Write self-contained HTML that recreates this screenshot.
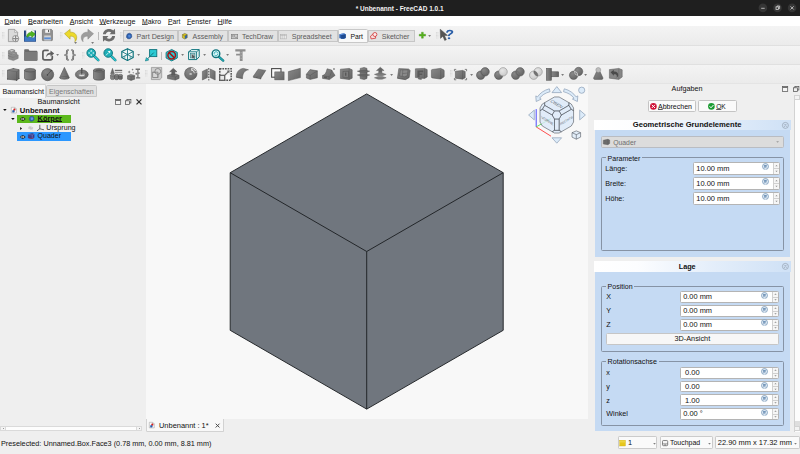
<!DOCTYPE html>
<html><head><meta charset="utf-8"><title>FreeCAD</title>
<style>
*{box-sizing:border-box;margin:0;padding:0}
html,body{width:800px;height:454px;overflow:hidden;background:#efefef;font-family:"Liberation Sans",sans-serif;font-size:7.2px;color:#111}
.t{position:absolute;white-space:nowrap;line-height:1}
.r{position:absolute}
svg{position:absolute;overflow:visible}
u{text-decoration-thickness:0.5px;text-underline-offset:0.2px;text-decoration-color:#5a5a5a}
</style></head><body>
<div class="r" style="left:0.00px;top:0.00px;width:800.00px;height:15.70px;background:#1f1f1f;"></div>
<span class="t" style="left:355.70px;top:6.02px;font-size:6.49px;color:#f4f4f4;font-weight:bold;">* Unbenannt - FreeCAD 1.0.1</span>
<svg style="left:750px;top:0" width="50" height="16" viewBox="750 0 50 16"><g fill="#353535"><circle cx="762.9" cy="7.9" r="4.3"/><circle cx="777.5" cy="7.9" r="4.3"/><circle cx="792.1" cy="7.9" r="4.3"/></g><g stroke="#dcdcdc" stroke-width="0.75" fill="none"><path d="M761.2 8.3h3.500"/><rect x="776" y="6.900" width="2.600" height="2.600"/><path d="M777 6.900v-0.900h2.600v2.600h-1"/><path d="M790.500 6.300l3.200 3.200M793.700 6.300l-3.200 3.200"/></g></svg>
<div class="r" style="left:0.00px;top:15.70px;width:800.00px;height:10.20px;background:#ffffff;"></div>
<span class="t" style="left:4.50px;top:18.02px;font-size:7.07px;color:#111;"><u>D</u>atei</span>
<span class="t" style="left:28.00px;top:18.02px;font-size:7.24px;color:#111;"><u>B</u>earbeiten</span>
<span class="t" style="left:69.70px;top:19.02px;font-size:7.11px;color:#111;"><u>A</u>nsicht</span>
<span class="t" style="left:99.40px;top:19.02px;font-size:7.18px;color:#111;"><u>W</u>erkzeuge</span>
<span class="t" style="left:142.00px;top:19.02px;font-size:6.84px;color:#111;"><u>M</u>akro</span>
<span class="t" style="left:168.00px;top:19.02px;font-size:6.76px;color:#111;"><u>P</u>art</span>
<span class="t" style="left:187.00px;top:19.02px;font-size:7.08px;color:#111;"><u>F</u>enster</span>
<span class="t" style="left:217.60px;top:18.02px;font-size:7.20px;color:#111;"><u>H</u>ilfe</span>
<div class="r" style="left:0.00px;top:25.90px;width:800.00px;height:58.70px;background:#efefef;"></div>
<div class="r" style="left:0.00px;top:25.90px;width:800.00px;height:19.10px;background:linear-gradient(#f4f4f4,#f0f0f0 45%,#ebebeb)"></div>
<div class="r" style="left:0.00px;top:45.00px;width:800.00px;height:19.40px;background:linear-gradient(#f4f4f4,#f0f0f0 45%,#ebebeb)"></div>
<div class="r" style="left:0.00px;top:64.40px;width:800.00px;height:18.80px;background:linear-gradient(#f4f4f4,#f0f0f0 45%,#ebebeb)"></div>
<div class="r" style="left:0.00px;top:45.40px;width:800.00px;height:0.80px;background:#e0e0e0;"></div>
<div class="r" style="left:0.00px;top:64.40px;width:800.00px;height:0.80px;background:#e0e0e0;"></div>
<div class="r" style="left:0.00px;top:83.20px;width:800.00px;height:0.80px;background:#e4e4e4;"></div>
<div class="r" style="left:123.40px;top:29.60px;width:54.60px;height:12.60px;background:#e2e2e2;border:0.8px solid #c6c6c6;"></div>
<span class="t" style="left:136.60px;top:34.02px;font-size:7.16px;color:#5a5a5a;">Part Design</span>
<div class="r" style="left:178.00px;top:29.60px;width:50.00px;height:12.60px;background:#e2e2e2;border:0.8px solid #c6c6c6;"></div>
<span class="t" style="left:192.60px;top:33.02px;font-size:7.01px;color:#5a5a5a;">Assembly</span>
<div class="r" style="left:228.00px;top:29.60px;width:49.50px;height:12.60px;background:#e2e2e2;border:0.8px solid #c6c6c6;"></div>
<span class="t" style="left:242.00px;top:34.02px;font-size:6.97px;color:#5a5a5a;">TechDraw</span>
<div class="r" style="left:277.50px;top:29.60px;width:60.00px;height:12.60px;background:#e2e2e2;border:0.8px solid #c6c6c6;"></div>
<span class="t" style="left:291.70px;top:33.02px;font-size:7.05px;color:#5a5a5a;">Spreadsheet</span>
<div class="r" style="left:367.50px;top:29.60px;width:47.00px;height:12.60px;background:#e2e2e2;border:0.8px solid #c6c6c6;"></div>
<span class="t" style="left:381.70px;top:33.02px;font-size:7.04px;color:#5a5a5a;">Sketcher</span>
<div class="r" style="left:337.50px;top:28.50px;width:30.30px;height:14.00px;background:#f9f9f9;border:0.8px solid #c8c8c8;border-radius:1.5px 1.5px 0 0"></div>
<span class="t" style="left:350.50px;top:34.02px;font-size:6.82px;color:#111;">Part</span>
<div class="r" style="left:145.50px;top:84.00px;width:442.80px;height:335.20px;background:#f8f8f8;"></div>
<svg style="left:0.00px;top:0.80px" width="800.00" height="454.00" viewBox="0 0 800 454"><polygon points="366.7,92.9 503.2,171.7 503.2,329.3 366.7,408.1 230.2,329.3 230.2,171.7" fill="#70767e" stroke="#1f2225" stroke-width="0.95" stroke-linejoin="round"/>
<polyline points="230.2,171.7 366.7,250.5 503.2,171.7" fill="none" stroke="#1f2225" stroke-width="0.95"/>
<line x1="366.7" y1="250.5" x2="366.7" y2="408.1" stroke="#1f2225" stroke-width="0.95"/></svg>
<div class="r" style="left:0.00px;top:84.00px;width:145.50px;height:348.10px;background:#efefef;"></div>
<div class="r" style="left:0.00px;top:84.20px;width:46.20px;height:13.60px;background:#f8f8f8;border:0.8px solid #d4d4d4;border-bottom:none;border-left:none;border-radius:0 1.5px 0 0"></div>
<span class="t" style="left:2.40px;top:88.02px;font-size:7.20px;color:#111;">Baumansicht</span>
<div class="r" style="left:46.20px;top:85.10px;width:50.50px;height:12.40px;background:#e1e1e1;border:0.8px solid #c6c6c6;border-radius:1.5px 1.5px 0 0"></div>
<span class="t" style="left:49.00px;top:88.02px;font-size:7.07px;color:#7a7a7a;">Eigenschaften</span>
<span class="t" style="left:37.50px;top:98.02px;font-size:7.30px;color:#111;">Baumansicht</span>
<div class="r" style="left:17.30px;top:114.70px;width:53.60px;height:8.40px;background:#5cb91c;"></div>
<div class="r" style="left:17.30px;top:131.90px;width:53.60px;height:8.70px;background:#2b97ff;"></div>
<span class="t" style="left:19.70px;top:107.02px;font-size:7.66px;color:#111;font-weight:bold;">Unbenannt</span>
<span class="t" style="left:37.50px;top:115.02px;font-size:7.47px;color:#111;font-weight:bold;text-decoration:underline;text-decoration-thickness:0.6px;text-underline-offset:0.2px">Körper</span>
<span class="t" style="left:46.30px;top:125.02px;font-size:7.12px;color:#111;">Ursprung</span>
<span class="t" style="left:37.50px;top:132.02px;font-size:7.05px;color:#111;">Quader</span>
<div class="r" style="left:0.00px;top:425.50px;width:142.40px;height:5.90px;background:#fdfdfd;border:0.7px solid #dadada;"></div>
<div class="r" style="left:0.00px;top:425.50px;width:6.00px;height:5.90px;background:#f4f4f4;border:0.7px solid #dadada;"></div>
<div class="r" style="left:136.40px;top:425.50px;width:6.00px;height:5.90px;background:#f4f4f4;border:0.7px solid #dadada;"></div>
<div class="r" style="left:2.60px;top:428.00px;width:0.90px;height:0.90px;background:#9a9a9a;"></div>
<div class="r" style="left:139.00px;top:428.00px;width:0.90px;height:0.90px;background:#9a9a9a;"></div>
<div class="r" style="left:145.20px;top:419.20px;width:655.00px;height:13.00px;background:#efefef;"></div>
<div class="r" style="left:145.90px;top:419.00px;width:77.90px;height:12.60px;background:#f8f8f8;border:0.8px solid #d2d2d2;border-top:none;border-radius:0 0 1.5px 1.5px"></div>
<span class="t" style="left:159.00px;top:422.02px;font-size:7.45px;color:#111;">Unbenannt : 1*</span>
<div class="r" style="left:0.00px;top:432.20px;width:800.00px;height:22.60px;background:#efefef;"></div>
<span class="t" style="left:1.00px;top:440.02px;font-size:7.28px;color:#111;">Preselected: Unnamed.Box.Face3 (0.78 mm, 0.00 mm, 8.81 mm)</span>
<div class="r" style="left:618.30px;top:436.30px;width:39.10px;height:12.30px;background:#fafafa;border:0.8px solid #cbcbcb;border-radius:1.2px"></div>
<div class="r" style="left:660.20px;top:436.30px;width:52.40px;height:12.30px;background:#fafafa;border:0.8px solid #cbcbcb;border-radius:1.2px"></div>
<div class="r" style="left:715.40px;top:436.30px;width:84.20px;height:12.30px;background:#fafafa;border:0.8px solid #cbcbcb;border-radius:1.2px"></div>
<span class="t" style="left:628.00px;top:439.02px;font-size:7.40px;color:#111;">1</span>
<span class="t" style="left:670.00px;top:440.02px;font-size:6.96px;color:#111;">Touchpad</span>
<span class="t" style="left:717.80px;top:439.02px;font-size:7.46px;color:#111;">22.90 mm x 17.32 mm</span>
<svg style="left:619px;top:439px" width="8" height="8" viewBox="619 439 8 8"><rect x="619.700" y="440.200" width="5.700" height="5.800" fill="#e7c71c" stroke="#cfae10" stroke-width="0.400"/><rect x="620" y="440.500" width="5.100" height="2" fill="#f1db52" opacity="0.7"/></svg>
<div class="r" style="left:588.30px;top:84.00px;width:211.70px;height:347.40px;background:#efefef;"></div>
<span class="t" style="left:671.60px;top:85.02px;font-size:7.22px;color:#111;">Aufgaben</span>
<div class="r" style="left:648.00px;top:100.00px;width:48.00px;height:12.00px;background:#fafafa;border:0.8px solid #c4c4c4;border-radius:1.5px"></div>
<div class="r" style="left:698.00px;top:100.00px;width:39.00px;height:12.00px;background:#fafafa;border:0.8px solid #c4c4c4;border-radius:1.5px"></div>
<span class="t" style="left:658.00px;top:103.02px;font-size:7.03px;color:#111;"><u>A</u>bbrechen</span>
<span class="t" style="left:716.20px;top:104.02px;font-size:6.64px;color:#111;"><u>O</u>K</span>
<div class="r" style="left:594.20px;top:119.50px;width:196.40px;height:10.60px;background:linear-gradient(90deg,#ffffff 0%,#fcfdff 22%,#e4eefa 60%,#cfe1f6 100%)"></div>
<span class="t" style="left:632.80px;top:121.02px;font-size:7.62px;color:#111;font-weight:bold;">Geometrische Grundelemente</span>
<div class="r" style="left:594.90px;top:130.00px;width:195.50px;height:126.80px;background:#c5daf3;"></div>
<div class="r" style="left:601.00px;top:136.00px;width:183.00px;height:12.00px;background:#dcdcdc;border:0.8px solid #b9bcc2;border-radius:1.5px"></div>
<span class="t" style="left:613.20px;top:140.02px;font-size:6.84px;color:#6e6e6e;">Quader</span>
<div class="r" style="left:601.00px;top:157.00px;width:183.00px;height:94.00px;border:0.8px solid #8693a5;border-radius:1.5px"></div>
<div class="r" style="left:605.80px;top:155.00px;width:36.40px;height:5.00px;background:#c5daf3;"></div>
<span class="t" style="left:607.60px;top:155.02px;font-size:7.03px;color:#111;">Parameter</span>
<span class="t" style="left:605.20px;top:165.02px;font-size:7.19px;color:#111;">Länge:</span>
<div class="r" style="left:693.00px;top:162.00px;width:86.50px;height:13.00px;background:#ffffff;border:0.8px solid #b4b4b4;border-radius:1.5px"></div>
<span class="t" style="left:696.30px;top:165.02px;font-size:7.49px;color:#111;">10.00 mm</span>
<div class="r" style="left:772.50px;top:163.00px;width:6.00px;height:11.00px;background:#f6f6f6;border-left:0.8px solid #d0d0d0"></div>
<div class="r" style="left:772.50px;top:168.00px;width:6.00px;height:0.80px;background:#d0d0d0;"></div>
<svg style="left:772.50px;top:162.00px" width="7.00" height="13.00" viewBox="0 0 7 13"><path d="M2.300 4.30l1.200 -1.400l1.200 1.400zM2.300 8.70l1.200 1.400l1.200 -1.400z" fill="#8a8a8a"/></svg>
<svg style="left:761.70px;top:162.80px" width="7.00" height="7.00" viewBox="0 0 10 10"><circle cx="5" cy="5" r="4.300" fill="#dbe6f1" stroke="#6d90b3" stroke-width="1"/><path d="M3 3.600h4M3 5.400h4M4.300 3v4.200" stroke="#4f7ba6" stroke-width="0.900" fill="none"/><path d="M3.800 9.200l2.400 0" stroke="#eef3f8" stroke-width="0.800"/></svg>
<span class="t" style="left:605.20px;top:180.02px;font-size:7.20px;color:#111;">Breite:</span>
<div class="r" style="left:693.00px;top:177.00px;width:86.50px;height:13.00px;background:#ffffff;border:0.8px solid #b4b4b4;border-radius:1.5px"></div>
<span class="t" style="left:696.30px;top:180.02px;font-size:7.49px;color:#111;">10.00 mm</span>
<div class="r" style="left:772.50px;top:178.00px;width:6.00px;height:11.00px;background:#f6f6f6;border-left:0.8px solid #d0d0d0"></div>
<div class="r" style="left:772.50px;top:183.00px;width:6.00px;height:0.80px;background:#d0d0d0;"></div>
<svg style="left:772.50px;top:177.00px" width="7.00" height="13.00" viewBox="0 0 7 13"><path d="M2.300 4.30l1.200 -1.400l1.200 1.400zM2.300 8.70l1.200 1.400l1.200 -1.400z" fill="#8a8a8a"/></svg>
<svg style="left:761.70px;top:177.80px" width="7.00" height="7.00" viewBox="0 0 10 10"><circle cx="5" cy="5" r="4.300" fill="#dbe6f1" stroke="#6d90b3" stroke-width="1"/><path d="M3 3.600h4M3 5.400h4M4.300 3v4.200" stroke="#4f7ba6" stroke-width="0.900" fill="none"/><path d="M3.800 9.200l2.400 0" stroke="#eef3f8" stroke-width="0.800"/></svg>
<span class="t" style="left:605.20px;top:195.02px;font-size:7.19px;color:#111;">Höhe:</span>
<div class="r" style="left:693.00px;top:192.00px;width:86.50px;height:13.00px;background:#ffffff;border:0.8px solid #b4b4b4;border-radius:1.5px"></div>
<span class="t" style="left:696.30px;top:195.02px;font-size:7.49px;color:#111;">10.00 mm</span>
<div class="r" style="left:772.50px;top:193.00px;width:6.00px;height:11.00px;background:#f6f6f6;border-left:0.8px solid #d0d0d0"></div>
<div class="r" style="left:772.50px;top:198.00px;width:6.00px;height:0.80px;background:#d0d0d0;"></div>
<svg style="left:772.50px;top:192.00px" width="7.00" height="13.00" viewBox="0 0 7 13"><path d="M2.300 4.30l1.200 -1.400l1.200 1.400zM2.300 8.70l1.200 1.400l1.200 -1.400z" fill="#8a8a8a"/></svg>
<svg style="left:761.70px;top:192.80px" width="7.00" height="7.00" viewBox="0 0 10 10"><circle cx="5" cy="5" r="4.300" fill="#dbe6f1" stroke="#6d90b3" stroke-width="1"/><path d="M3 3.600h4M3 5.400h4M4.300 3v4.200" stroke="#4f7ba6" stroke-width="0.900" fill="none"/><path d="M3.800 9.200l2.400 0" stroke="#eef3f8" stroke-width="0.800"/></svg>
<div class="r" style="left:594.20px;top:261.30px;width:196.40px;height:10.50px;background:linear-gradient(90deg,#ffffff 0%,#fcfdff 22%,#e4eefa 60%,#cfe1f6 100%)"></div>
<span class="t" style="left:678.70px;top:263.02px;font-size:7.28px;color:#111;font-weight:bold;">Lage</span>
<div class="r" style="left:594.90px;top:271.80px;width:195.50px;height:159.60px;background:#c5daf3;"></div>
<div class="r" style="left:601.00px;top:286.00px;width:183.00px;height:65.50px;border:0.8px solid #8693a5;border-radius:1.5px"></div>
<div class="r" style="left:605.80px;top:284.00px;width:28.60px;height:5.00px;background:#c5daf3;"></div>
<span class="t" style="left:607.60px;top:283.02px;font-size:7.03px;color:#111;">Position</span>
<span class="t" style="left:606.30px;top:293.02px;font-size:7.20px;color:#111;">X</span>
<div class="r" style="left:680.00px;top:291.00px;width:99.00px;height:12.00px;background:#ffffff;border:0.8px solid #b4b4b4;border-radius:1.5px"></div>
<span class="t" style="left:683.20px;top:293.02px;font-size:7.40px;color:#111;">0.00 mm</span>
<div class="r" style="left:772.00px;top:292.00px;width:6.00px;height:10.00px;background:#f6f6f6;border-left:0.8px solid #d0d0d0"></div>
<div class="r" style="left:772.00px;top:296.50px;width:6.00px;height:0.80px;background:#d0d0d0;"></div>
<svg style="left:772.00px;top:291.00px" width="7.00" height="12.00" viewBox="0 0 7 12"><path d="M2.300 3.80l1.200 -1.400l1.200 1.400zM2.300 8.20l1.200 1.400l1.200 -1.400z" fill="#8a8a8a"/></svg>
<svg style="left:761.20px;top:291.90px" width="7.00" height="7.00" viewBox="0 0 10 10"><circle cx="5" cy="5" r="4.300" fill="#dbe6f1" stroke="#6d90b3" stroke-width="1"/><path d="M3 3.600h4M3 5.400h4M4.300 3v4.200" stroke="#4f7ba6" stroke-width="0.900" fill="none"/><path d="M3.800 9.200l2.400 0" stroke="#eef3f8" stroke-width="0.800"/></svg>
<span class="t" style="left:606.30px;top:307.02px;font-size:7.20px;color:#111;">Y</span>
<div class="r" style="left:680.00px;top:305.00px;width:99.00px;height:12.00px;background:#ffffff;border:0.8px solid #b4b4b4;border-radius:1.5px"></div>
<span class="t" style="left:683.20px;top:307.02px;font-size:7.40px;color:#111;">0.00 mm</span>
<div class="r" style="left:772.00px;top:306.00px;width:6.00px;height:10.00px;background:#f6f6f6;border-left:0.8px solid #d0d0d0"></div>
<div class="r" style="left:772.00px;top:310.50px;width:6.00px;height:0.80px;background:#d0d0d0;"></div>
<svg style="left:772.00px;top:305.00px" width="7.00" height="12.00" viewBox="0 0 7 12"><path d="M2.300 3.80l1.200 -1.400l1.200 1.400zM2.300 8.20l1.200 1.400l1.200 -1.400z" fill="#8a8a8a"/></svg>
<svg style="left:761.20px;top:305.65px" width="7.00" height="7.00" viewBox="0 0 10 10"><circle cx="5" cy="5" r="4.300" fill="#dbe6f1" stroke="#6d90b3" stroke-width="1"/><path d="M3 3.600h4M3 5.400h4M4.300 3v4.200" stroke="#4f7ba6" stroke-width="0.900" fill="none"/><path d="M3.800 9.200l2.400 0" stroke="#eef3f8" stroke-width="0.800"/></svg>
<span class="t" style="left:606.30px;top:321.02px;font-size:7.20px;color:#111;">Z</span>
<div class="r" style="left:680.00px;top:319.00px;width:99.00px;height:12.00px;background:#ffffff;border:0.8px solid #b4b4b4;border-radius:1.5px"></div>
<span class="t" style="left:683.20px;top:321.02px;font-size:7.40px;color:#111;">0.00 mm</span>
<div class="r" style="left:772.00px;top:320.00px;width:6.00px;height:10.00px;background:#f6f6f6;border-left:0.8px solid #d0d0d0"></div>
<div class="r" style="left:772.00px;top:324.50px;width:6.00px;height:0.80px;background:#d0d0d0;"></div>
<svg style="left:772.00px;top:319.00px" width="7.00" height="12.00" viewBox="0 0 7 12"><path d="M2.300 3.80l1.200 -1.400l1.200 1.400zM2.300 8.20l1.200 1.400l1.200 -1.400z" fill="#8a8a8a"/></svg>
<svg style="left:761.20px;top:319.40px" width="7.00" height="7.00" viewBox="0 0 10 10"><circle cx="5" cy="5" r="4.300" fill="#dbe6f1" stroke="#6d90b3" stroke-width="1"/><path d="M3 3.600h4M3 5.400h4M4.300 3v4.200" stroke="#4f7ba6" stroke-width="0.900" fill="none"/><path d="M3.800 9.200l2.400 0" stroke="#eef3f8" stroke-width="0.800"/></svg>
<div class="r" style="left:606.00px;top:333.00px;width:173.00px;height:12.00px;background:#f7f7f7;border:0.8px solid #c6c6c6;border-radius:1.5px"></div>
<span class="t" style="left:674.50px;top:335.02px;font-size:7.30px;color:#111;">3D-Ansicht</span>
<div class="r" style="left:601.00px;top:361.00px;width:183.00px;height:64.80px;border:0.8px solid #8693a5;border-radius:1.5px"></div>
<div class="r" style="left:605.80px;top:359.00px;width:53.00px;height:5.00px;background:#c5daf3;"></div>
<span class="t" style="left:607.60px;top:359.02px;font-size:7.17px;color:#111;">Rotationsachse</span>
<span class="t" style="left:606.30px;top:369.02px;font-size:7.20px;color:#111;">x</span>
<div class="r" style="left:680.00px;top:367.00px;width:99.00px;height:12.00px;background:#ffffff;border:0.8px solid #b4b4b4;border-radius:1.5px"></div>
<span class="t" style="left:685.00px;top:369.02px;font-size:7.55px;color:#111;">0.00</span>
<div class="r" style="left:772.00px;top:368.00px;width:6.00px;height:10.00px;background:#f6f6f6;border-left:0.8px solid #d0d0d0"></div>
<div class="r" style="left:772.00px;top:372.50px;width:6.00px;height:0.80px;background:#d0d0d0;"></div>
<svg style="left:772.00px;top:367.00px" width="7.00" height="12.00" viewBox="0 0 7 12"><path d="M2.300 3.80l1.200 -1.400l1.200 1.400zM2.300 8.20l1.200 1.400l1.200 -1.400z" fill="#8a8a8a"/></svg>
<svg style="left:761.20px;top:367.90px" width="7.00" height="7.00" viewBox="0 0 10 10"><circle cx="5" cy="5" r="4.300" fill="#dbe6f1" stroke="#6d90b3" stroke-width="1"/><path d="M3 3.600h4M3 5.400h4M4.300 3v4.200" stroke="#4f7ba6" stroke-width="0.900" fill="none"/><path d="M3.800 9.200l2.400 0" stroke="#eef3f8" stroke-width="0.800"/></svg>
<span class="t" style="left:606.30px;top:383.02px;font-size:7.20px;color:#111;">y</span>
<div class="r" style="left:680.00px;top:381.00px;width:99.00px;height:11.00px;background:#ffffff;border:0.8px solid #b4b4b4;border-radius:1.5px"></div>
<span class="t" style="left:685.00px;top:383.02px;font-size:7.55px;color:#111;">0.00</span>
<div class="r" style="left:772.00px;top:382.00px;width:6.00px;height:9.00px;background:#f6f6f6;border-left:0.8px solid #d0d0d0"></div>
<div class="r" style="left:772.00px;top:386.00px;width:6.00px;height:0.80px;background:#d0d0d0;"></div>
<svg style="left:772.00px;top:381.00px" width="7.00" height="11.00" viewBox="0 0 7 11"><path d="M2.300 3.30l1.200 -1.400l1.200 1.400zM2.300 7.70l1.200 1.400l1.200 -1.400z" fill="#8a8a8a"/></svg>
<svg style="left:761.20px;top:381.63px" width="7.00" height="7.00" viewBox="0 0 10 10"><circle cx="5" cy="5" r="4.300" fill="#dbe6f1" stroke="#6d90b3" stroke-width="1"/><path d="M3 3.600h4M3 5.400h4M4.300 3v4.200" stroke="#4f7ba6" stroke-width="0.900" fill="none"/><path d="M3.800 9.200l2.400 0" stroke="#eef3f8" stroke-width="0.800"/></svg>
<span class="t" style="left:606.30px;top:397.02px;font-size:7.20px;color:#111;">z</span>
<div class="r" style="left:680.00px;top:394.00px;width:99.00px;height:12.00px;background:#ffffff;border:0.8px solid #b4b4b4;border-radius:1.5px"></div>
<span class="t" style="left:685.00px;top:397.02px;font-size:7.55px;color:#111;">1.00</span>
<div class="r" style="left:772.00px;top:395.00px;width:6.00px;height:10.00px;background:#f6f6f6;border-left:0.8px solid #d0d0d0"></div>
<div class="r" style="left:772.00px;top:399.50px;width:6.00px;height:0.80px;background:#d0d0d0;"></div>
<svg style="left:772.00px;top:394.00px" width="7.00" height="12.00" viewBox="0 0 7 12"><path d="M2.300 3.80l1.200 -1.400l1.200 1.400zM2.300 8.20l1.200 1.400l1.200 -1.400z" fill="#8a8a8a"/></svg>
<svg style="left:761.20px;top:395.36px" width="7.00" height="7.00" viewBox="0 0 10 10"><circle cx="5" cy="5" r="4.300" fill="#dbe6f1" stroke="#6d90b3" stroke-width="1"/><path d="M3 3.600h4M3 5.400h4M4.300 3v4.200" stroke="#4f7ba6" stroke-width="0.900" fill="none"/><path d="M3.800 9.200l2.400 0" stroke="#eef3f8" stroke-width="0.800"/></svg>
<span class="t" style="left:606.30px;top:410.02px;font-size:7.20px;color:#111;">Winkel</span>
<div class="r" style="left:680.00px;top:408.00px;width:99.00px;height:12.00px;background:#ffffff;border:0.8px solid #b4b4b4;border-radius:1.5px"></div>
<span class="t" style="left:683.20px;top:410.02px;font-size:7.47px;color:#111;">0.00 °</span>
<div class="r" style="left:772.00px;top:409.00px;width:6.00px;height:10.00px;background:#f6f6f6;border-left:0.8px solid #d0d0d0"></div>
<div class="r" style="left:772.00px;top:413.50px;width:6.00px;height:0.80px;background:#d0d0d0;"></div>
<svg style="left:772.00px;top:408.00px" width="7.00" height="12.00" viewBox="0 0 7 12"><path d="M2.300 3.80l1.200 -1.400l1.200 1.400zM2.300 8.20l1.200 1.400l1.200 -1.400z" fill="#8a8a8a"/></svg>
<svg style="left:761.20px;top:409.09px" width="7.00" height="7.00" viewBox="0 0 10 10"><circle cx="5" cy="5" r="4.300" fill="#dbe6f1" stroke="#6d90b3" stroke-width="1"/><path d="M3 3.600h4M3 5.400h4M4.300 3v4.200" stroke="#4f7ba6" stroke-width="0.900" fill="none"/><path d="M3.800 9.200l2.400 0" stroke="#eef3f8" stroke-width="0.800"/></svg>
<div class="r" style="left:794.20px;top:94.60px;width:6.00px;height:337.00px;background:#fcfcfc;border-left:0.8px solid #d2d2d2"></div>
<div class="r" style="left:794.20px;top:94.60px;width:6.00px;height:5.00px;background:#f3f3f3;border:0.7px solid #d2d2d2;"></div>
<div class="r" style="left:794.20px;top:426.00px;width:6.00px;height:5.00px;background:#f3f3f3;border:0.7px solid #d2d2d2;"></div>
<div class="r" style="left:794.20px;top:420.60px;width:6.00px;height:5.20px;background:#dedede;border-left:0.8px solid #cfcfcf"></div>
<svg style="left:1.60px;top:31.95px" width="2.40" height="6.40" viewBox="0 0 2.4 6.4"><path d="M0.500 0v6.4M1.900 0v6.4" stroke="#d0d0d0" stroke-width="0.800" stroke-dasharray="0.900 0.600"/></svg>
<svg style="left:8.00px;top:28.65px" width="12.00" height="13.00" viewBox="0 0 12 13"><path d="M0.4 0.4h6.2l3 3v9.2h-9.2z" fill="#dadada" stroke="#8b8b8b" stroke-width="0.7"/>
<path d="M6.6 0.4v3h3z" fill="#f3f3f3" stroke="#8b8b8b" stroke-width="0.5" stroke-linejoin="round"/>
<circle cx="7.6" cy="9.6" r="3.1" fill="#f2f2f2" stroke="#8a8a8a" stroke-width="0.9"/>
<path d="M7.6 6.7v5.8M4.7 9.6h5.8" stroke="#8a8a8a" stroke-width="1.2"/></svg>
<svg style="left:24.20px;top:28.55px" width="12.00" height="12.80" viewBox="0 0 12 12.8"><rect x="0" y="1.5" width="12" height="11.2" fill="#21427c"/>
<path d="M2.2 0.2h6.4l1.9 1.9v8h-8.3z" fill="#fbfbfb" stroke="#cfcfcf" stroke-width="0.35"/>
<path d="M8.6 0.2v1.9h1.9z" fill="#d8d8d8"/>
<path d="M0.5 7.8c1.6-0.9 3.2-0.9 5.5 0s3.9 0.9 5.5 0v4.5h-11z" fill="#3f79c3"/>
<path d="M2.6 7.6c0.1-2.6 2-4.3 4.6-4.2l0-1.3 4.2 3-3.6 3.6-0.2-1.7c-1.6-0.4-3.2 0-3.7 1.3z" fill="#4db31f" stroke="#2d7d10" stroke-width="0.45" stroke-linejoin="round"/></svg>
<svg style="left:41.80px;top:29.25px" width="10.80" height="12.00" viewBox="0 0 10.8 12"><path d="M0.4 1.1q0-0.7 0.7-0.7h8.3l1 1v9.5q0 0.7-0.7 0.7h-8.6q-0.7 0-0.7-0.7z" fill="#929292" stroke="#6d6d6d" stroke-width="0.7"/>
<rect x="3.2" y="0.5" width="4.9" height="3.3" fill="#f4f4f4"/>
<rect x="6.1" y="0.9" width="1" height="2.2" fill="#4e4e4e"/>
<rect x="2.2" y="6.5" width="6.6" height="5" fill="#d2d2d2"/>
<rect x="2.2" y="8.4" width="6.6" height="1.9" fill="#5b8dd4"/></svg>
<svg style="left:59.60px;top:31.95px" width="2.40" height="6.40" viewBox="0 0 2.4 6.4"><path d="M0.500 0v6.4M1.900 0v6.4" stroke="#d0d0d0" stroke-width="0.800" stroke-dasharray="0.900 0.600"/></svg>
<svg style="left:63.60px;top:28.55px" width="14.00" height="14.50" viewBox="0 0 14 14.5"><path d="M0.5 4.7l5.6-4.4v2.9c4.2-0.3 6.8 2.2 6.6 5.6-0.1 1.9-0.9 3.1-1.8 3.9 0.4-1.7 0.1-3.4-0.9-4.4-0.9-0.9-2.2-1.2-3.9-1.1v3z" fill="#ecd92c" stroke="#ab9c1b" stroke-width="0.55" stroke-linejoin="round"/></svg>
<svg style="left:74.00px;top:41.65px" width="3.20" height="1.80" viewBox="0 0 3.2 1.8"><path d="M0.2 0.2h2.8l-1.4 1.5z" fill="#555"/></svg>
<svg style="left:79.60px;top:28.55px" width="14.00" height="14.50" viewBox="0 0 14 14.5"><path d="M13.5 4.7l-5.6-4.4v2.9c-4.2-0.3-6.8 2.2-6.6 5.6 0.1 1.9 0.9 3.1 1.8 3.9-0.4-1.7-0.1-3.4 0.9-4.4 0.9-0.9 2.2-1.2 3.9-1.1v3z" fill="#9d9d9d" stroke="#858585" stroke-width="0.5" stroke-linejoin="round"/></svg>
<svg style="left:90.60px;top:41.95px" width="3.20" height="1.80" viewBox="0 0 3.2 1.8"><path d="M0.2 0.2h2.8l-1.4 1.5z" fill="#555"/></svg>
<div class="r" style="left:98.00px;top:32.20px;width:0.80px;height:8.20px;background:#b9b9b9;"></div>
<svg style="left:102.60px;top:28.75px" width="12.00" height="12.40" viewBox="0 0 12 12.4"><g transform="translate(-0.75,-0.75) scale(1.125)" fill="#6e6e6e"><path d="M0.600 5.400c0.200-3 2.600-4.900 5.600-4.800 1.400 0 2.600 0.500 3.500 1.300l1.600-1.500 0.200 5h-5l1.500-1.700c-1.300-1-3.300-0.900-4.200 0.400-0.300 0.400-0.500 0.800-0.600 1.300z"/>
<path d="M11.400 7c-0.200 3-2.600 4.900-5.600 4.800-1.400 0-2.600-0.500-3.500-1.300l-1.600 1.500-0.200-5h5l-1.500 1.700c1.300 1 3.300 0.900 4.200-0.400 0.300-0.400 0.500-0.800 0.600-1.300z"/></g></svg>
<svg style="left:120.20px;top:31.95px" width="2.40" height="6.40" viewBox="0 0 2.4 6.4"><path d="M0.500 0v6.4M1.900 0v6.4" stroke="#d0d0d0" stroke-width="0.800" stroke-dasharray="0.900 0.600"/></svg>
<svg style="left:125.70px;top:33.35px" width="6.20" height="6.20" viewBox="0 0 6.2 6.2"><path d="M1.6 0.8l2.3-0.6 1.6 1.2 0.3 2.6-1.6 1.7-2.4 0.1-1.4-1.6 0.4-2.2z" fill="#2c5fae" stroke="#1c3f7d" stroke-width="0.5"/><path d="M2 2.2l1.8-0.4 1 1.2-0.6 1.4-1.7 0.1z" fill="#4f86d6"/></svg>
<svg style="left:181.80px;top:33.05px" width="5.60" height="6.40" viewBox="0 0 5.6 6.4"><path d="M0.4 1.6l2.4-1.2 2.4 1.2v3.2l-2.4 1.3-2.4-1.3z" fill="#d9c321" stroke="#5a5a2a" stroke-width="0.45"/><path d="M2.8 3v3.1l2.4-1.3v-3.2z" fill="#3465a4"/><path d="M0.4 1.6l2.4 1.4 2.4-1.4" fill="none" stroke="#5a5a2a" stroke-width="0.4"/></svg>
<svg style="left:230.70px;top:33.85px" width="7.00" height="5.00" viewBox="0 0 7 5"><rect x="0.3" y="0.3" width="6.4" height="4.4" fill="#c9c9c9" stroke="#7a7a7a" stroke-width="0.6"/><path d="M1.3 1.3h2.2v1.4h-2.2zM4.2 3.4h1.8" stroke="#6a6a6a" stroke-width="0.5" fill="#efefef"/></svg>
<svg style="left:280.20px;top:33.85px" width="6.60" height="5.20" viewBox="0 0 6.6 5.2"><rect x="0.3" y="0.3" width="6" height="4.6" fill="#e9e9e9" stroke="#a8a8a8" stroke-width="0.5"/><path d="M2.2 0.3v4.6M4.3 0.3v4.6M0.3 1.5h6" stroke="#a8a8a8" stroke-width="0.45"/></svg>
<svg style="left:339.20px;top:32.85px" width="7.00" height="6.20" viewBox="0 0 7 6.2"><path d="M0.3 1.2l4.6-0.9 1.8 0.9v3.7l-1.8 1-4.6-0.6z" fill="#2f62b0"/><path d="M0.3 1.2l4.6-0.9 1.8 0.9-4.5 0.9z" fill="#6a9ae2"/><path d="M2.2 2.1l4.5-0.9v3.7l-4.5 1z" fill="#1f4a8f"/></svg>
<svg style="left:369.80px;top:32.45px" width="7.40" height="7.40" viewBox="0 0 7.4 7.4"><path d="M0.5 4.2l2.1-1.8 2.6 0.7 0.5 3.1-4.6 0.7z" fill="#f6dede" stroke="#cc1f1f" stroke-width="0.7" stroke-linejoin="round"/><circle cx="4.9" cy="2.5" r="2" fill="#fbeaea" stroke="#cc1f1f" stroke-width="0.7"/></svg>
<svg style="left:419.00px;top:31.95px" width="6.80" height="6.40" viewBox="0 0 6.8 6.4"><path d="M2.5 0.2h1.8v2.1h2.3v1.8h-2.3v2.1h-1.8v-2.1h-2.3v-1.8h2.3z" fill="#56b21e" stroke="#3c8a12" stroke-width="0.35"/></svg>
<svg style="left:427.60px;top:34.75px" width="3.20" height="1.80" viewBox="0 0 3.2 1.8"><path d="M0.2 0.2h2.8l-1.4 1.5z" fill="#555"/></svg>
<svg style="left:435.60px;top:31.95px" width="2.40" height="6.40" viewBox="0 0 2.4 6.4"><path d="M0.500 0v6.4M1.900 0v6.4" stroke="#d0d0d0" stroke-width="0.800" stroke-dasharray="0.900 0.600"/></svg>
<svg style="left:439.60px;top:28.75px" width="13.40" height="11.80" viewBox="0 0 13.4 11.8"><g transform="translate(-0.6,0) scale(1.32,1.02)"><path d="M7.2 6.400c-0.100-1.600 2.600-1.700 2.600-3.400 0-1-0.900-1.600-1.900-1.600-1.100 0-1.900 0.600-2.100 1.600" fill="none" stroke="#2b5fa8" stroke-width="1.500" stroke-linecap="round"/><circle cx="7.300" cy="9" r="0.950" fill="#2b5fa8"/></g>
<path d="M0.2 0.2l0.3 9.2 2.3-2.2 1.9 4.3 1.7-0.8-1.9-4.1 3.1-0.2z" fill="#555" stroke="#3a3a3a" stroke-width="0.4" stroke-linejoin="round"/></svg>
<svg style="left:1.60px;top:51.55px" width="2.40" height="6.40" viewBox="0 0 2.4 6.4"><path d="M0.500 0v6.4M1.900 0v6.4" stroke="#d0d0d0" stroke-width="0.800" stroke-dasharray="0.900 0.600"/></svg>
<svg style="left:7.50px;top:48.75px" width="10.60" height="12.00" viewBox="0 0 10.6 12"><g stroke="#707070" stroke-width="0.450" stroke-linejoin="round">
<path d="M0.400 6.600l5-1.800 4.800 1.400v3.200l-4.800 2.200-5-1.600z" fill="#8a8a8a"/><path d="M0.400 6.600l5 1.600 4.800-2-4.800-1.400z" fill="#b9b9b9"/>
<path d="M0.400 4.200l4.200-1.600 4 1.200v2.600l-3.800 1.800-4.400-1.400z" fill="#8d8d8d"/><path d="M0.400 4.200l4.400 1.400 3.800-1.800-4-1.200z" fill="#c2c2c2"/>
<path d="M0.400 1.900l3.400-1.500 3 0.900v2.300l-3 1.500-3.400-1z" fill="#909090"/><path d="M0.400 1.900l3.400 1 3-1.600-3-0.900z" fill="#cacaca"/></g></svg>
<svg style="left:23.50px;top:49.05px" width="13.60" height="12.00" viewBox="0 0 13.6 12"><path d="M0.2 0.9q0-0.7 0.7-0.7h3.6l1 1.6h7.2q0.7 0 0.7 0.7v8.6q0 0.7-0.7 0.7h-11.8q-0.7 0-0.7-0.7z" fill="#6a6a6a"/>
<path d="M0.2 3h13.2v8.1q0 0.7-0.7 0.7h-11.8q-0.7 0-0.7-0.7z" fill="#7b7b7b"/></svg>
<svg style="left:41.50px;top:49.25px" width="12.40" height="11.80" viewBox="0 0 12.4 11.8"><path d="M6 1.4h-3.2q-1.9 0-1.9 1.9v5.6q0 1.9 1.9 1.9h5.6q1.9 0 1.9-1.9v-1.6" fill="none" stroke="#5e5e5e" stroke-width="1.7" stroke-linecap="round"/>
<path d="M4.2 8.2c0-2.900 1.6-4.700 4.300-4.800v-1.900l3.700 3-3.700 3v-1.900c-1.800 0-3.200 0.700-4.300 2.600z" fill="#5e5e5e"/></svg>
<svg style="left:56.20px;top:54.45px" width="3.20" height="1.80" viewBox="0 0 3.2 1.8"><path d="M0.2 0.2h2.8l-1.4 1.5z" fill="#555"/></svg>
<svg style="left:64.00px;top:49.05px" width="12.00" height="12.00" viewBox="0 0 12 12"><g fill="none" stroke-linecap="butt" stroke-linejoin="round"><path d="M4.700 1q-1.900 0-1.900 1.900v1.700q0 1.400-1.700 1.400q1.700 0 1.700 1.400v1.700q0 1.900 1.900 1.900" stroke="#505050" stroke-width="1.700"/><path d="M7.300 1q1.900 0 1.900 1.900v1.700q0 1.400 1.700 1.400q-1.700 0-1.700 1.400v1.700q0 1.900-1.900 1.900" stroke="#505050" stroke-width="1.700"/><path d="M4.700 1q-1.900 0-1.900 1.900v1.700q0 1.400-1.700 1.400q1.700 0 1.700 1.400v1.700q0 1.900 1.900 1.900" stroke="#dcdcdc" stroke-width="0.500"/><path d="M7.300 1q1.900 0 1.900 1.900v1.700q0 1.400 1.700 1.400q-1.700 0-1.700 1.400v1.700q0 1.900-1.900 1.900" stroke="#dcdcdc" stroke-width="0.500"/></g></svg>
<svg style="left:82.00px;top:51.55px" width="2.40" height="6.40" viewBox="0 0 2.4 6.4"><path d="M0.500 0v6.4M1.900 0v6.4" stroke="#d0d0d0" stroke-width="0.800" stroke-dasharray="0.900 0.600"/></svg>
<svg style="left:86.30px;top:48.45px" width="13.40" height="13.00" viewBox="0 0 13.4 13"><path d="M8.600 8.500l3.700 3.700" stroke="#0f737c" stroke-width="2.500" stroke-linecap="round"/><path d="M8.600 8.500l3.700 3.700" stroke="#2ccbd4" stroke-width="1.500" stroke-linecap="round"/>
<circle cx="5.200" cy="5" r="4.300" fill="#1eaeb7" stroke="#0f737c" stroke-width="0.900"/>
<path d="M5.200 1.700l1.100 1.700h-2.200zM5.200 8.300l1.100-1.700h-2.200zM1.900 5l1.700-1.100v2.200zM8.500 5l-1.700-1.100v2.200z" fill="#eefcfd"/></svg>
<svg style="left:103.10px;top:48.45px" width="13.40" height="13.00" viewBox="0 0 13.4 13"><path d="M8.600 8.500l3.700 3.700" stroke="#0f737c" stroke-width="2.500" stroke-linecap="round"/><path d="M8.600 8.500l3.700 3.700" stroke="#2ccbd4" stroke-width="1.500" stroke-linecap="round"/>
<circle cx="5.200" cy="5" r="4.300" fill="#1eaeb7" stroke="#0f737c" stroke-width="0.900"/>
<path d="M2.900 7.400l2.600-2.600" stroke="#eefcfd" stroke-width="0.800"/><path d="M7.500 2.700l-0.500 2.900-2.400-2.400z" fill="#eefcfd"/></svg>
<svg style="left:121.00px;top:48.45px" width="13.00" height="13.00" viewBox="0 0 13 13"><path d="M6.500 0.700l5.700 2.900v5.900l-5.700 2.900-5.700-2.900v-5.900z" fill="#f2f6f6" stroke="#0f737c" stroke-width="1.150" stroke-linejoin="round"/>
<path d="M6.500 0.700v11.700M0.800 3.600l11.400 5.900M12.200 3.600l-11.400 5.900" fill="none" stroke="#0f737c" stroke-width="0.850"/>
<path d="M3 8.600l1.700 0.200-0.900 1.200zM10 8.600l-1.700 0.200 0.900 1.200z" fill="#0f737c"/></svg>
<svg style="left:136.60px;top:54.45px" width="3.20" height="1.80" viewBox="0 0 3.2 1.8"><path d="M0.2 0.2h2.8l-1.4 1.5z" fill="#555"/></svg>
<svg style="left:144.60px;top:48.85px" width="12.40" height="12.40" viewBox="0 0 12.4 12.4"><rect x="4.600" y="0.600" width="7.200" height="7" fill="#2ccbd4" stroke="#0f737c" stroke-width="0.900"/>
<path d="M8.800 3.600l-6.400 6.400" stroke="#0f737c" stroke-width="1"/><path d="M0.400 12l1-3.400 2.400 2.400z" fill="#2ccbd4" stroke="#0f737c" stroke-width="0.600" stroke-linejoin="round"/></svg>
<div class="r" style="left:160.80px;top:52.10px;width:0.80px;height:7.60px;background:#b9b9b9;"></div>
<svg style="left:164.80px;top:48.55px" width="13.40" height="12.40" viewBox="0 0 13.4 12.4"><path d="M6.700 0.500l5.600 2.900v5.600l-5.600 2.900-5.600-2.900v-5.600z" fill="#2ccbd4" stroke="#0f737c" stroke-width="0.900" stroke-linejoin="round"/>
<circle cx="6.700" cy="6.200" r="3.800" fill="none" stroke="#a51616" stroke-width="1.500"/><path d="M4 3.500l5.400 5.400" stroke="#a51616" stroke-width="1.500"/></svg>
<svg style="left:180.60px;top:54.25px" width="3.20" height="1.80" viewBox="0 0 3.2 1.8"><path d="M0.2 0.2h2.8l-1.4 1.5z" fill="#555"/></svg>
<svg style="left:188.40px;top:49.05px" width="12.00" height="11.40" viewBox="0 0 12 11.4"><path d="M0.600 2.800l3-2.200h7.600v7.200l-2.600 2.800h-8z" fill="#f2fbfb" stroke="#0f737c" stroke-width="1" stroke-linejoin="round"/>
<path d="M0.600 2.800h8v7.800M8.600 2.800l2.600-2.200" fill="none" stroke="#0f737c" stroke-width="0.900"/>
<rect x="2.400" y="4.600" width="4.600" height="4.400" fill="#9fb7b9" stroke="#0f737c" stroke-width="0.500"/>
<path d="M4 5.400l0.200 4 1-1 0.900 1.700 0.700-0.400-0.900-1.600 1.300-0.200z" fill="#555"/></svg>
<svg style="left:203.10px;top:54.25px" width="3.20" height="1.80" viewBox="0 0 3.2 1.8"><path d="M0.2 0.2h2.8l-1.4 1.5z" fill="#555"/></svg>
<svg style="left:211.00px;top:48.65px" width="13.40" height="12.60" viewBox="0 0 13.4 12.6"><path d="M8 7.800l4.200 3.800" stroke="#0f737c" stroke-width="2.400" stroke-linecap="round"/><path d="M8 7.800l4.200 3.800" stroke="#23b4bd" stroke-width="1.100" stroke-linecap="round"/>
<circle cx="5" cy="4.700" r="3.800" fill="#d7f4f6" stroke="#0f737c" stroke-width="1.400"/>
<path d="M3.100 4.800a2 2 0 0 1 3.600-1.200M6.900 4.600a2 2 0 0 1-3.400 1.500" fill="none" stroke="#1aa3ac" stroke-width="0.900"/></svg>
<svg style="left:226.10px;top:54.25px" width="3.20" height="1.80" viewBox="0 0 3.2 1.8"><path d="M0.2 0.2h2.8l-1.4 1.5z" fill="#555"/></svg>
<svg style="left:235.00px;top:49.15px" width="10.80" height="12.20" viewBox="0 0 10.8 12.2"><path d="M0.300 0.300h10.200v2.200h-2.900v9.400h-2.800v-5.300h-3.700v-1.900h3.700v-2.200h-4.500z" fill="#8f8f8f"/>
<path d="M5.500 3.500h1.300M5.500 5h0.900M5.500 6.500h1.300M5.500 8h0.900M5.500 9.500h1.300" stroke="#dcdcdc" stroke-width="0.400"/></svg>
<svg width="0" height="0" style="left:0;top:0"><defs>
<linearGradient id="gg" x1="0" y1="0" x2="1" y2="1"><stop offset="0" stop-color="#888888"/><stop offset="1" stop-color="#646464"/></linearGradient>
<linearGradient id="gh" x1="0" y1="0" x2="1" y2="0"><stop offset="0" stop-color="#878787"/><stop offset="0.5" stop-color="#767676"/><stop offset="1" stop-color="#606060"/></linearGradient>
<radialGradient id="gs" cx="0.35" cy="0.3" r="0.8"><stop offset="0" stop-color="#888888"/><stop offset="1" stop-color="#616161"/></radialGradient>
<radialGradient id="gl" cx="0.4" cy="0.35" r="0.8"><stop offset="0" stop-color="#e6e6e6"/><stop offset="1" stop-color="#c4c4c4"/></radialGradient>
</defs></svg>
<svg style="left:1.60px;top:70.45px" width="2.40" height="6.40" viewBox="0 0 2.4 6.4"><path d="M0.500 0v6.4M1.900 0v6.4" stroke="#d0d0d0" stroke-width="0.800" stroke-dasharray="0.900 0.600"/></svg>
<svg style="left:6.50px;top:67.85px" width="12.60" height="12.80" viewBox="0 0 12.6 12.8"><path d="M0.500 2.200l5.800-1.700 5.800 1.200v8.800l-2.400 1.800-9.200-1.100z" fill="url(#gg)" stroke="#4e4e4e" stroke-width="0.600" stroke-linejoin="round"/>
<path d="M0.500 2.200l9.200 1.300 2.400-1.800M9.700 3.500v8.800" fill="none" stroke="#4e4e4e" stroke-width="0.500"/><path d="M0.500 2.200l5.800-1.700 5.800 1.200-2.400 1.800z" fill="#858585" opacity="0.7"/><g fill="#3e3e3e"><circle cx="0.600" cy="11.100" r="0.500"/><circle cx="9.700" cy="12.200" r="0.500"/><circle cx="12" cy="10.500" r="0.500"/><circle cx="6.300" cy="0.600" r="0.450"/></g></svg>
<svg style="left:24.00px;top:67.65px" width="12.00" height="12.60" viewBox="0 0 12 12.6"><path d="M0.500 2.200v8.200a5.500 1.800 0 0 0 11 0v-8.200z" fill="url(#gh)" stroke="#4e4e4e" stroke-width="0.600"/><ellipse cx="6" cy="2.200" rx="5.500" ry="1.800" fill="#777" stroke="#4e4e4e" stroke-width="0.600"/></svg>
<svg style="left:41.00px;top:67.55px" width="13.20" height="13.20" viewBox="0 0 13.2 13.2"><circle cx="6.600" cy="6.600" r="6.100" fill="url(#gs)" stroke="#4e4e4e" stroke-width="0.600"/><path d="M6.400 7l3.800-4.400" stroke="#4a4a4a" stroke-width="0.700"/><circle cx="6.400" cy="7" r="0.700" fill="#3e3e3e"/><circle cx="10.200" cy="2.700" r="0.600" fill="#3e3e3e"/></svg>
<svg style="left:59.40px;top:67.45px" width="10.80" height="12.80" viewBox="0 0 10.8 12.8"><path d="M5.400 0.400l-4.800 10.400a4.900 1.700 0 0 0 9.700 0z" fill="url(#gh)" stroke="#4e4e4e" stroke-width="0.600" stroke-linejoin="round"/><path d="M0.600 10.800a4.900 1.500 0 0 1 9.700 0" fill="none" stroke="#4e4e4e" stroke-width="0.400"/></svg>
<svg style="left:75.00px;top:68.45px" width="13.60" height="11.60" viewBox="0 0 13.6 11.6"><ellipse cx="6.800" cy="6.500" rx="6.400" ry="4.600" fill="url(#gs)" stroke="#4e4e4e" stroke-width="0.600"/><ellipse cx="6.800" cy="6.900" rx="3.300" ry="1.900" fill="#dcdcdc" stroke="#4e4e4e" stroke-width="0.500"/><path d="M3.600 7.300a3.300 1.900 0 0 1 6.400 0a3.300 1.500 0 0 0-6.400 0z" fill="#5e5e5e"/><path d="M6.800 0.200v6.400" stroke="#444" stroke-width="1"/><circle cx="6.800" cy="0.800" r="0.750" fill="#444"/></svg>
<svg style="left:93.00px;top:67.65px" width="12.00" height="12.60" viewBox="0 0 12 12.6"><path d="M0.500 2.200v8.200a5.500 1.800 0 0 0 11 0v-8.200z" fill="url(#gh)" stroke="#4e4e4e" stroke-width="0.600"/><ellipse cx="6" cy="2.200" rx="5.500" ry="1.800" fill="#808080" stroke="#4e4e4e" stroke-width="0.600"/><ellipse cx="6" cy="2.300" rx="3.600" ry="1" fill="#5c5c5c"/></svg>
<svg style="left:110.00px;top:67.85px" width="12.80" height="12.40" viewBox="0 0 12.8 12.4"><path d="M2.500 0.300l-1.900 5.400h3.800z" fill="#6c6c6c" stroke="#4e4e4e" stroke-width="0.400"/><rect x="4.800" y="1.800" width="7.400" height="1.300" fill="#6a6a6a"/><path d="M4.800 4.400h7.400" stroke="#7a7a7a" stroke-width="0.700"/>
<path d="M0.500 7.200v3.400a2 1 0 0 0 4 0v-3.400zM4.600 7v3.800a2 1 0 0 0 4 0v-3.800zM8.600 7.200v3.400a1.900 1 0 0 0 3.800 0v-3.400z" fill="url(#gh)" stroke="#4e4e4e" stroke-width="0.500"/><ellipse cx="6.600" cy="7" rx="2" ry="0.900" fill="#909090" stroke="#4e4e4e" stroke-width="0.400"/><ellipse cx="2.500" cy="7.200" rx="2" ry="0.900" fill="#909090" stroke="#4e4e4e" stroke-width="0.400"/><ellipse cx="10.500" cy="7.200" rx="1.900" ry="0.900" fill="#909090" stroke="#4e4e4e" stroke-width="0.400"/></svg>
<svg style="left:127.00px;top:67.65px" width="13.60" height="12.60" viewBox="0 0 13.6 12.6"><path d="M0.500 7.800l3.200-1.400 4 1v3.800l-3.600 1.200-3.600-1.200z" fill="url(#gg)" stroke="#4e4e4e" stroke-width="0.500" stroke-linejoin="round"/><path d="M0.500 7.800l3.600 1 3.600-0.400M4.100 8.800v3.600" fill="none" stroke="#4e4e4e" stroke-width="0.400"/>
<path d="M8.600 0.600h4.400v1.300h-1.500v2.600h1.300v1.200h-1.300v3.600h1.700v1.300h-4.200v-1.300h1.300v-7.400h-1.700z" fill="#6e6e6e"/><circle cx="9.300" cy="5.700" r="1" fill="#7a7a7a"/>
<path d="M2.200 2.600l0.500 1 1 0.500-1 0.500-0.500 1-0.500-1-1-0.500 1-0.500zM5.600 0.400l0.400 0.800 0.800 0.400-0.800 0.400-0.400 0.800-0.400-0.800-0.800-0.400 0.800-0.400zM6.200 3.800l0.300 0.700 0.700 0.300-0.700 0.300-0.300 0.700-0.300-0.700-0.700-0.300 0.700-0.300z" fill="#777"/></svg>
<svg style="left:145.20px;top:70.45px" width="2.40" height="6.40" viewBox="0 0 2.4 6.4"><path d="M0.500 0v6.4M1.900 0v6.4" stroke="#d0d0d0" stroke-width="0.800" stroke-dasharray="0.900 0.600"/></svg>
<svg style="left:151.00px;top:67.45px" width="11.20" height="13.00" viewBox="0 0 11.2 13"><path d="M0.400 0.400h10.300v10.400l-1.800 1.800h-8.500z" fill="#cdcdcd" stroke="#8e8e8e" stroke-width="0.700" stroke-linejoin="round"/>
<rect x="1.700" y="5.200" width="5.200" height="5.400" fill="#d6d6d6" stroke="#7c7c7c" stroke-width="0.800"/><circle cx="6.800" cy="4.400" r="2.900" fill="#d6d6d6" fill-opacity="0.6" stroke="#7c7c7c" stroke-width="0.800"/><path d="M1.700 5.200h5.200v5.400" fill="none" stroke="#7c7c7c" stroke-width="0.600"/></svg>
<svg style="left:167.00px;top:67.75px" width="12.60" height="12.40" viewBox="0 0 12.6 12.4"><path d="M0.500 7.600l3.600-1.600h5l3 1.400v3l-3.800 1.700-7.800-1.500z" fill="url(#gg)" stroke="#4e4e4e" stroke-width="0.500" stroke-linejoin="round"/><path d="M0.500 7.600l7.800 1.300 3.800-1.500M8.300 8.900v3.200" fill="none" stroke="#4e4e4e" stroke-width="0.400"/>
<path d="M6.300 0.200l3.700 3.600h-2.100v3.400h-3.200v-3.400h-2.100z" fill="#606060" stroke="#4a4a4a" stroke-width="0.400" stroke-linejoin="round"/></svg>
<svg style="left:184.40px;top:67.45px" width="13.80" height="13.20" viewBox="0 0 13.8 13.2"><circle cx="6.800" cy="6.700" r="6.200" fill="url(#gs)" stroke="#4e4e4e" stroke-width="0.600"/>
<path d="M7.200 0.900a5.600 5.600 0 0 1 5.400 5l-2.600 0.300a3.200 3.200 0 0 0-2.900-2.800z" fill="#e6e6e6"/><path d="M8.400 2.300a4.300 4.300 0 0 1 2.700 2.500" fill="none" stroke="#5a5a5a" stroke-width="0.900"/><path d="M12 3.900l-0.300 2.100-1.900-1z" fill="#5a5a5a"/><circle cx="6.600" cy="7" r="1.100" fill="#ececec"/><circle cx="6.600" cy="7" r="0.450" fill="#555"/></svg>
<svg style="left:201.60px;top:67.85px" width="13.60" height="12.40" viewBox="0 0 13.6 12.4"><path d="M0.400 3.400l5-2.400v8.600l-5 2.400z" fill="url(#gg)" stroke="#4e4e4e" stroke-width="0.500" stroke-linejoin="round"/><path d="M13.200 3.400l-5-2.400v8.600l5 2.400z" fill="url(#gg)" stroke="#4e4e4e" stroke-width="0.500" stroke-linejoin="round"/>
<path d="M6.800 0v12.400" stroke="#3e3e3e" stroke-width="1" stroke-dasharray="1.700 1.100"/></svg>
<svg style="left:218.80px;top:67.55px" width="13.00" height="13.00" viewBox="0 0 13 13"><rect x="0.800" y="0.800" width="11.400" height="11.400" fill="none" stroke="#555" stroke-width="1.500" stroke-dasharray="1.700 0.900"/>
<rect x="0.700" y="7.300" width="5" height="5" fill="#e8e8e8" stroke="#5a5a5a" stroke-width="1.200"/><path d="M6 7l3.400-3.400" stroke="#666" stroke-width="1.100"/><path d="M10.700 2.300l-0.500 3-2.500-2.500z" fill="#666"/><rect x="7.200" y="7.200" width="3.600" height="3.600" fill="#fafafa"/></svg>
<svg style="left:236.00px;top:68.25px" width="12.80" height="11.20" viewBox="0 0 12.8 11.2"><path d="M0.300 9.200c0-5 2.600-8.400 7.200-8.800l5 1.400c-4 0.600-6 3.600-6 8.800z" fill="url(#gg)" stroke="#4e4e4e" stroke-width="0.500" stroke-linejoin="round"/><path d="M0.300 9.200l6.200 1.400" stroke="#4e4e4e" stroke-width="0.400"/></svg>
<svg style="left:253.00px;top:68.25px" width="13.20" height="11.20" viewBox="0 0 13.2 11.2"><path d="M0.400 8.200l4.800-7 7.600 1.200-4.800 7.600z" fill="url(#gg)" stroke="#4e4e4e" stroke-width="0.500" stroke-linejoin="round"/><path d="M0.400 8.200v1.200l7.600 1.700v-1.100" fill="#5f5f5f" stroke="#4e4e4e" stroke-width="0.400" stroke-linejoin="round"/></svg>
<svg style="left:270.80px;top:68.25px" width="13.40" height="12.20" viewBox="0 0 13.4 12.2"><rect x="0.600" y="0.600" width="9.400" height="8.600" fill="#fafafa" stroke="#4a4a4a" stroke-width="1.100"/><rect x="3.800" y="3.900" width="9.300" height="8" fill="url(#gg)" stroke="#555" stroke-width="0.500"/></svg>
<svg style="left:288.00px;top:67.85px" width="12.80" height="12.60" viewBox="0 0 12.8 12.6"><path d="M0.400 3.600l12-3.300v9.300l-12 3z" fill="url(#gg)" stroke="#4e4e4e" stroke-width="0.500" stroke-linejoin="round"/></svg>
<svg style="left:305.60px;top:68.85px" width="12.00" height="10.80" viewBox="0 0 12 10.8"><path d="M0.400 5.200l3.600-4.600 7.400 1.200v7l-7.200 1.600-3.800-1.400z" fill="url(#gg)" stroke="#4e4e4e" stroke-width="0.500" stroke-linejoin="round"/><path d="M0.400 5.200l3.800 1.200 7.200-4.600M4.200 6.400v4" fill="none" stroke="#4e4e4e" stroke-width="0.400"/></svg>
<svg style="left:322.00px;top:67.85px" width="13.60" height="12.00" viewBox="0 0 13.6 12"><path d="M0.500 7.600c2.600-0.600 3.800-3 4.600-6.800l4.600 1.200c1.200 2.200 2.400 4 3.400 5.400l-5.600 4.200-7-1.200z" fill="url(#gg)" stroke="#4e4e4e" stroke-width="0.500" stroke-linejoin="round"/><path d="M0.500 7.600l6.600 1.200c1.400-1.400 2.200-4 2.600-6.800M7.100 8.800v2.800" fill="none" stroke="#4e4e4e" stroke-width="0.400"/><rect x="2" y="8.600" width="3" height="1.300" fill="#555"/><circle cx="12" cy="1" r="0.800" fill="#444"/></svg>
<svg style="left:340.00px;top:67.85px" width="12.60" height="12.00" viewBox="0 0 12.6 12"><path d="M0.400 1.200l8.800-0.800 3 1.400v8.400l-3 1.400-8.800-1.200z" fill="url(#gg)" stroke="#4e4e4e" stroke-width="0.500" stroke-linejoin="round"/><rect x="3" y="3.200" width="5.400" height="6" fill="#7e7e7e" stroke="#595959" stroke-width="0.600"/><rect x="5" y="4.600" width="1.400" height="3.200" fill="#595959"/><path d="M9.200 0.400v11.200" stroke="#4e4e4e" stroke-width="0.400"/></svg>
<svg style="left:356.80px;top:67.45px" width="13.00" height="13.00" viewBox="0 0 13 13"><path d="M3.200 1.400l4-1 2.800 1v10l-2.800 1.200-4-1z" fill="url(#gg)" stroke="#4e4e4e" stroke-width="0.500" stroke-linejoin="round"/><path d="M0.300 4.200l3-0.800h6.600l2.800 0.800-3 1h-6.400zM0.300 8l3-0.800h6.600l2.800 0.800-3 1h-6.400z" fill="#6a6a6a" stroke="#4a4a4a" stroke-width="0.400" stroke-linejoin="round"/></svg>
<svg style="left:374.20px;top:67.45px" width="12.60" height="13.00" viewBox="0 0 12.6 13"><path d="M6.300 0.200l3.800 3.400h-2.200v2.200h-3.200v-2.200h-2.200z" fill="#666" stroke="#505050" stroke-width="0.400" stroke-linejoin="round"/><path d="M0.400 7.400l4-1.400h4l3.800 1.400-4 1.400h-4zM0.400 10.800l4-1.400h4l3.800 1.400-4 1.400h-4z" fill="#7c7c7c" stroke="#5a5a5a" stroke-width="0.400" stroke-linejoin="round"/></svg>
<svg style="left:389.60px;top:73.85px" width="3.20" height="1.80" viewBox="0 0 3.2 1.8"><path d="M0.2 0.2h2.8l-1.4 1.5z" fill="#555"/></svg>
<svg style="left:396.80px;top:67.85px" width="13.60" height="12.00" viewBox="0 0 13.6 12"><path d="M1.800 0.600l9.800 0.400 1.600 1.400-1 7-3.800 2.200-8-1.400z" fill="url(#gg)" stroke="#4e4e4e" stroke-width="0.500" stroke-linejoin="round"/><path d="M3.400 1.800l7.600 0.300-0.600 5.400-2.600 1.300-5.200-0.900z" fill="#8a8a8a" stroke="#4e4e4e" stroke-width="0.400" stroke-linejoin="round"/><path d="M5.800 1.900l-0.400 6.300M5.600 5.600l5-0.600" stroke="#4e4e4e" stroke-width="0.400"/><path d="M0.400 10.200l8 1.400 3.800-2.200" fill="none" stroke="#4e4e4e" stroke-width="0.500"/></svg>
<svg style="left:414.80px;top:68.25px" width="12.60" height="11.60" viewBox="0 0 12.6 11.6"><path d="M0.400 0.800l9.200-0.400 2.600 1.200v7.400l-2.600 1.400-3.200-0.200v1.200l-3-0.400v-1.200l-3-0.300z" fill="url(#gg)" stroke="#4e4e4e" stroke-width="0.500" stroke-linejoin="round"/><path d="M2.400 2.600h5.800v1.600h-3.600v1.400h2.600v1.400h-2.600v2.200h-2.200z" fill="#5a5a5a"/><path d="M9.600 0.400v10" stroke="#4e4e4e" stroke-width="0.400"/></svg>
<svg style="left:431.00px;top:68.35px" width="13.60" height="11.40" viewBox="0 0 13.6 11.4"><path d="M0.400 2.400q0-0.800 0.800-0.900l7.800-1.100q0.500-0.100 1 0.200l2.600 1.200q0.600 0.300 0.600 1v5.600q0 0.600-0.500 0.900l-2.700 1.500q-0.500 0.300-1 0.200l-7.800-1.100q-0.800-0.100-0.800-0.900z" fill="url(#gg)" stroke="#4e4e4e" stroke-width="0.500"/><path d="M9.700 2v9" stroke="#4e4e4e" stroke-width="0.400"/></svg>
<svg style="left:450.00px;top:70.45px" width="2.40" height="6.40" viewBox="0 0 2.4 6.4"><path d="M0.500 0v6.4M1.900 0v6.4" stroke="#d0d0d0" stroke-width="0.800" stroke-dasharray="0.900 0.600"/></svg>
<svg style="left:454.20px;top:68.55px" width="13.00" height="11.20" viewBox="0 0 13 11.2"><path d="M1.400 2.200l7.200-0.800 2.600 1v6.400l-2.600 1.400-7.200-1z" fill="url(#gg)" stroke="#4e4e4e" stroke-width="0.500" stroke-linejoin="round"/><path d="M8.600 1.400v8.800" stroke="#4e4e4e" stroke-width="0.400"/>
<path d="M0.400 2.200v-1.800h1.800M12.600 2.200v-1.800h-1.800M0.400 9v1.800h1.800M12.600 9v1.800h-1.800" fill="none" stroke="#555" stroke-width="0.700"/></svg>
<svg style="left:469.80px;top:73.85px" width="3.20" height="1.80" viewBox="0 0 3.2 1.8"><path d="M0.2 0.2h2.8l-1.4 1.5z" fill="#555"/></svg>
<svg style="left:476.40px;top:67.35px" width="13.80" height="12.80" viewBox="0 0 13.8 12.8"><circle cx="4.700" cy="8.200" r="4.200" fill="url(#gs)" stroke="#4e4e4e" stroke-width="0.550"/><circle cx="9.100" cy="4.800" r="4.200" fill="url(#gs)" stroke="#4e4e4e" stroke-width="0.550"/></svg>
<svg style="left:494.00px;top:67.35px" width="13.80" height="12.80" viewBox="0 0 13.8 12.8"><circle cx="4.700" cy="8.200" r="4.200" fill="url(#gs)" stroke="#4e4e4e" stroke-width="0.550"/><circle cx="9.100" cy="4.800" r="4.200" fill="url(#gl)" stroke="#8a8a8a" stroke-width="0.550"/></svg>
<svg style="left:511.40px;top:67.35px" width="13.80" height="12.80" viewBox="0 0 13.8 12.8"><circle cx="4.700" cy="8.200" r="4.200" fill="url(#gs)" stroke="#5a5a5a" stroke-width="0.550"/><circle cx="9.100" cy="4.800" r="4.200" fill="url(#gs)" stroke="#5a5a5a" stroke-width="0.550"/><path d="M5.200 4.100a4.200 4.200 0 0 1 3.600 4.600" fill="none" stroke="#6a6a6a" stroke-width="0.500"/></svg>
<svg style="left:528.60px;top:67.35px" width="13.80" height="12.80" viewBox="0 0 13.8 12.8"><circle cx="4.700" cy="8.200" r="4.200" fill="url(#gl)" stroke="#8a8a8a" stroke-width="0.550"/><circle cx="9.100" cy="4.800" r="4.200" fill="url(#gl)" stroke="#8a8a8a" stroke-width="0.550"/><path d="M5.050 4.010a4.200 4.200 0 0 1 3.700 4.980a4.200 4.200 0 0 1-3.700-4.980z" fill="#727272" stroke="#555" stroke-width="0.400"/></svg>
<svg style="left:546.20px;top:67.85px" width="13.00" height="12.60" viewBox="0 0 13 12.6"><rect x="0.300" y="0.300" width="5.200" height="12" fill="url(#gh)" stroke="#4e4e4e" stroke-width="0.500"/><rect x="5.500" y="3.800" width="7.200" height="5" fill="url(#gh)" stroke="#4e4e4e" stroke-width="0.500"/></svg>
<svg style="left:561.30px;top:73.85px" width="3.20" height="1.80" viewBox="0 0 3.2 1.8"><path d="M0.2 0.2h2.8l-1.4 1.5z" fill="#555"/></svg>
<svg style="left:568.60px;top:67.35px" width="14.20" height="12.80" viewBox="0 0 14.2 12.8"><circle cx="4.600" cy="8.300" r="4.200" fill="url(#gs)" stroke="#4e4e4e" stroke-width="0.500"/><circle cx="9.600" cy="4.500" r="4.200" fill="url(#gs)" stroke="#4e4e4e" stroke-width="0.500"/><path d="M5.420 4.180a4.200 4.200 0 0 1 3.360 4.440" fill="none" stroke="#e4e4e4" stroke-width="0.700"/><path d="M8.780 8.620a4.200 4.200 0 0 1-3.360-4.440" fill="none" stroke="#e4e4e4" stroke-width="0.700"/></svg>
<svg style="left:584.40px;top:73.85px" width="3.20" height="1.80" viewBox="0 0 3.2 1.8"><path d="M0.2 0.2h2.8l-1.4 1.5z" fill="#555"/></svg>
<svg style="left:593.00px;top:67.35px" width="10.60" height="12.80" viewBox="0 0 10.6 12.8"><path d="M3.600 4.600l-2.900 6.200q-0.400 1.500 1 1.600h7.200q1.400-0.100 1-1.600l-2.900-6.200z" fill="url(#gg)" stroke="#4e4e4e" stroke-width="0.500"/><circle cx="5.300" cy="3" r="2.500" fill="#bdbdbd" stroke="#8a8a8a" stroke-width="0.500"/></svg>
<svg style="left:609.00px;top:68.15px" width="13.60" height="11.80" viewBox="0 0 13.6 11.8"><path d="M0.400 1.600l9.400-1.200 3.400 1.400v7.200l-3.400 2.400-9.400-1.200z" fill="#868686" stroke="#5a5a5a" stroke-width="0.500" stroke-linejoin="round"/><path d="M9.800 0.400v11" stroke="#5a5a5a" stroke-width="0.400"/>
<path d="M1.600 4.200l3.200-2.400v1.600c3.200-0.200 4.800 1.800 4.400 4.200-0.200 1-0.800 1.800-1.600 2.200 0.500-1.400 0.200-2.600-0.600-3.200-0.500-0.400-1.300-0.500-2.200-0.400v1.600z" fill="#4a4a4a"/></svg>
<svg style="left:2.50px;top:109.40px" width="3.80" height="2.20" viewBox="0 0 3.8 2.2"><path d="M0.100 0.100h3.600l-1.800 2z" fill="#111"/></svg>
<svg style="left:10.60px;top:107.10px" width="5.80" height="6.30" viewBox="0 0 5.8 6.3"><path d="M0.300 0.300h3.500l1.700 1.700v4h-5.200z" fill="#fafafa" stroke="#9a9a9a" stroke-width="0.500"/><path d="M3.800 0.300v1.700h1.700" fill="#e0e0e0" stroke="#9a9a9a" stroke-width="0.400"/><circle cx="3.400" cy="2.700" r="1.100" fill="#d42020"/><path d="M1.200 3.400l1.600-0.400 1 1.200-0.600 1.400-1.800-0.200z" fill="#2c5fae"/></svg>
<svg style="left:11.40px;top:118.00px" width="3.80" height="2.20" viewBox="0 0 3.8 2.2"><path d="M0.100 0.100h3.600l-1.800 2z" fill="#111"/></svg>
<svg style="left:19.50px;top:117.10px" width="5.60" height="4.00" viewBox="0 0 5.6 4"><path d="M0 2q2.800-3.400 5.600 0q-2.800 3.400-5.600 0z" fill="#111"/><ellipse cx="2.800" cy="2" rx="1.600" ry="1.050" fill="#fff"/><circle cx="2.800" cy="2" r="0.750" fill="#111"/></svg>
<svg style="left:28.80px;top:116.20px" width="5.40" height="5.40" viewBox="0 0 5.4 5.4"><path d="M1.400 0.600l2.200-0.400 1.400 1.300 0.100 2.200-1.400 1.400-2.200 0.100-1.200-1.500 0.200-2z" fill="#3767b5" stroke="#1f4585" stroke-width="0.450"/><path d="M1.700 1.700l1.700-0.400 0.900 1.100-0.500 1.400-1.700 0.100z" fill="#6d9ae0"/></svg>
<svg style="left:20.40px;top:126.50px" width="2.20" height="3.20" viewBox="0 0 2.2 3.2"><path d="M0.100 0.100v3l2-1.500z" fill="#111"/></svg>
<svg style="left:27.80px;top:125.90px" width="5.40" height="4.20" viewBox="0 0 5.4 4.2"><path d="M0.300 2q2.400-2.600 4.800 0q-2.400 2.600-4.800 0z" fill="none" stroke="#b5b5b5" stroke-width="0.600"/><circle cx="2.700" cy="2" r="0.800" fill="#c0c0c0"/><path d="M0.800 0.300l3.800 3.600" stroke="#b5b5b5" stroke-width="0.600"/></svg>
<svg style="left:37.00px;top:124.80px" width="6.80" height="5.80" viewBox="0 0 6.8 5.8"><path d="M2.800 0.200v3.600l3.800 0.900M2.800 3.800l-2.500 1.800" fill="none" stroke="#4a4a4a" stroke-width="0.800" stroke-linecap="round"/></svg>
<svg style="left:19.50px;top:134.60px" width="5.60" height="4.00" viewBox="0 0 5.6 4"><path d="M0 2q2.800-3.400 5.600 0q-2.800 3.400-5.600 0z" fill="#111"/><ellipse cx="2.800" cy="2" rx="1.600" ry="1.050" fill="#fff"/><circle cx="2.800" cy="2" r="0.750" fill="#111"/></svg>
<svg style="left:28.20px;top:133.40px" width="6.40" height="5.80" viewBox="0 0 6.4 5.8"><path d="M0.300 1.400l4-1 1.800 0.800v3.400l-1.800 1-4-0.600z" fill="#3b3f8f" stroke="#26265e" stroke-width="0.400"/><path d="M0.300 1.400l4 0.600 1.800-0.800M4.300 2v3.600" fill="none" stroke="#9aa0e0" stroke-width="0.350"/><path d="M0.300 4.600l4 0.600 1.800-1v0.500l-1.800 1-4-0.600z" fill="#c0262c"/></svg>
<svg style="left:114.80px;top:99.00px" width="6.20" height="6.00" viewBox="0 0 6.2 6"><rect x="0.500" y="0.500" width="5.200" height="5" fill="#f4f4f4" stroke="#5a5a5a" stroke-width="0.750"/><path d="M0.500 1.300h5.200" stroke="#6a6a6a" stroke-width="1.300"/></svg>
<svg style="left:125.10px;top:99.00px" width="6.40" height="5.80" viewBox="0 0 6.4 5.8"><rect x="1.900" y="0.400" width="4" height="3.600" fill="#efefef" stroke="#4a4a4a" stroke-width="0.700"/><rect x="0.400" y="1.800" width="4" height="3.600" fill="#efefef" stroke="#4a4a4a" stroke-width="0.700"/></svg>
<svg style="left:135.60px;top:99.00px" width="6.00" height="5.80" viewBox="0 0 6 5.8"><path d="M0.500 0.400l5 5M5.500 0.400l-5 5" stroke="#2e2e2e" stroke-width="1.250"/></svg>
<svg style="left:782.20px;top:85.60px" width="6.20" height="6.00" viewBox="0 0 6.2 6"><rect x="0.500" y="0.500" width="5.200" height="5" fill="#f4f4f4" stroke="#5a5a5a" stroke-width="0.750"/><path d="M0.500 1.300h5.200" stroke="#6a6a6a" stroke-width="1.300"/></svg>
<svg style="left:792.80px;top:85.60px" width="6.40" height="5.80" viewBox="0 0 6.4 5.8"><rect x="1.900" y="0.400" width="4" height="3.600" fill="#efefef" stroke="#4a4a4a" stroke-width="0.700"/><rect x="0.400" y="1.800" width="4" height="3.600" fill="#efefef" stroke="#4a4a4a" stroke-width="0.700"/></svg>
<svg style="left:650.00px;top:102.60px" width="6.80" height="6.80" viewBox="0 0 6.8 6.8"><circle cx="3.400" cy="3.400" r="3.300" fill="#cf1236"/><path d="M2.100 2.100l2.600 2.600M4.700 2.100l-2.600 2.600" stroke="#fff" stroke-width="1" stroke-linecap="round"/></svg>
<svg style="left:708.10px;top:102.60px" width="6.80" height="6.80" viewBox="0 0 6.8 6.8"><circle cx="3.400" cy="3.400" r="3.300" fill="#1c9c33"/><path d="M1.800 3.500l1.200 1.300 2.200-2.500" fill="none" stroke="#fff" stroke-width="1" stroke-linecap="round" stroke-linejoin="round"/></svg>
<svg style="left:603.10px;top:138.80px" width="7.00" height="6.00" viewBox="0 0 7 6"><path d="M0.300 1.200l4.600-0.900 1.800 0.800v3.400l-1.800 1.200-4.600-0.700z" fill="#6c6c6c" stroke="#555" stroke-width="0.400" stroke-linejoin="round"/><path d="M4.900 0.300v5.400" stroke="#505050" stroke-width="0.350"/></svg>
<svg style="left:775.80px;top:141.30px" width="3.20" height="1.80" viewBox="0 0 3.2 1.8"><path d="M0.200 0.200h2.800l-1.400 1.500z" fill="#9a9a9a"/></svg>
<svg style="left:782.20px;top:121.50px" width="6.80" height="6.80" viewBox="0 0 6.8 6.8"><circle cx="3.400" cy="3.400" r="3" fill="none" stroke="#8e9aa9" stroke-width="0.650"/><path d="M2.100 3.300l1.300-1.300 1.300 1.300M2.100 4.900l1.300-1.300 1.300 1.300" fill="none" stroke="#8e9aa9" stroke-width="0.650"/></svg>
<svg style="left:782.20px;top:263.30px" width="6.80" height="6.80" viewBox="0 0 6.8 6.8"><circle cx="3.400" cy="3.400" r="3" fill="none" stroke="#8e9aa9" stroke-width="0.650"/><path d="M2.100 3.300l1.300-1.300 1.300 1.300M2.100 4.900l1.300-1.300 1.300 1.300" fill="none" stroke="#8e9aa9" stroke-width="0.650"/></svg>
<svg style="left:148.50px;top:421.50px" width="5.60" height="6.20" viewBox="0 0 5.6 6.2"><path d="M0.300 0.300h3.400l1.600 1.600v4h-5z" fill="#fafafa" stroke="#9a9a9a" stroke-width="0.500"/><path d="M3.700 0.300v1.600h1.600" fill="#e0e0e0" stroke="#9a9a9a" stroke-width="0.400"/><circle cx="3.300" cy="2.700" r="1.100" fill="#d42020"/><path d="M1.100 3.400l1.600-0.400 1 1.200-0.600 1.400-1.800-0.200z" fill="#2c5fae"/></svg>
<svg style="left:214.90px;top:422.60px" width="5.20" height="5.20" viewBox="0 0 5.2 5.2"><path d="M0.700 0.700l3.800 3.800M4.500 0.700l-3.800 3.800" stroke="#4a4a4a" stroke-width="1"/></svg>
<svg style="left:662.40px;top:440.10px" width="6.20" height="6.20" viewBox="0 0 6.2 6.2"><rect x="0.500" y="0.500" width="5.200" height="5.200" rx="0.900" fill="#f4f4f4" stroke="#555" stroke-width="0.700"/><path d="M0.500 3.900h5.200M3.100 3.900v1.800" stroke="#555" stroke-width="0.600"/></svg>
<svg style="left:652.90px;top:443.20px" width="3.00" height="1.80" viewBox="0 0 3 1.8"><path d="M0.200 0.200h2.600l-1.300 1.400z" fill="#555"/></svg>
<svg style="left:708.10px;top:443.20px" width="3.00" height="1.80" viewBox="0 0 3 1.8"><path d="M0.200 0.200h2.600l-1.300 1.400z" fill="#555"/></svg>
<svg style="left:794.40px;top:443.20px" width="3.00" height="1.80" viewBox="0 0 3 1.8"><path d="M0.200 0.200h2.600l-1.300 1.400z" fill="#555"/></svg>
<svg style="left:0;top:0" width="800" height="454" viewBox="0 0 800 454"><path d="M536.200 126.900v-17.800" stroke="#3a3aff" stroke-width="0.9"/><path d="M536.200 126.900l14.800 9.300" stroke="#ff3a3a" stroke-width="0.9"/><path d="M536.200 126.900l14.800-8.300" stroke="#40e040" stroke-width="0.8"/><g stroke="#3f444b" stroke-width="0.55" stroke-linejoin="round" fill="#dbe9f9" fill-opacity="0.8"><polygon points="544.61,102.68 544.61,105.32 554.51,111.04 559.09,111.04 568.99,105.32 568.99,102.68 559.09,96.96 554.51,96.96"/><polygon points="540.03,122.04 542.32,126.00 552.23,131.72 554.51,130.40 554.51,118.96 552.23,115.00 542.32,109.28 540.03,110.60"/><polygon points="559.09,130.40 561.37,131.72 571.28,126.00 573.57,122.04 573.57,110.60 571.28,109.28 561.37,115.00 559.09,118.96"/><polygon points="544.61,105.32 554.51,111.04 552.23,115.00 542.32,109.28"/><polygon points="559.09,111.04 568.99,105.32 571.28,109.28 561.37,115.00"/><polygon points="554.51,130.40 554.51,118.96 559.09,118.96 559.09,130.40"/><polygon points="559.09,111.04 554.51,111.04 552.23,115.00 554.51,118.96 559.09,118.96 561.37,115.00"/><polygon points="544.61,102.68 544.61,105.32 542.32,109.28 540.03,110.60 540.03,107.96 542.32,104.00"/><polygon points="568.99,105.32 568.99,102.68 571.28,104.00 573.57,107.96 573.57,110.60 571.28,109.28"/><polygon points="559.09,133.04 554.51,133.04 552.23,131.72 554.51,130.40 559.09,130.40 561.37,131.72"/></g><text transform="matrix(0.8660 0.5000 -0.8660 0.5000 556.80 104.00)" font-size="4.60" text-anchor="middle" y="1.66" fill="#666d76" stroke="none" font-family="Liberation Sans,sans-serif">OBEN</text><text transform="matrix(0.8660 0.5000 0.0000 1.0000 547.27 120.50)" font-size="4.00" text-anchor="middle" y="1.44" fill="#666d76" stroke="none" font-family="Liberation Sans,sans-serif">VORNE</text><text transform="matrix(0.8660 -0.5000 0.0000 1.0000 566.33 120.50)" font-size="3.60" text-anchor="middle" y="1.30" fill="#666d76" stroke="none" font-family="Liberation Sans,sans-serif">RECHTS</text><path d="M556.8 86.6l4.8 6h-9.600z" fill="#dcebf9" stroke="#8b9eb4" stroke-width="0.7" stroke-linejoin="round"/><path d="M556.8 143.2l4.8-5.400h-9.600z" fill="#dcebf9" stroke="#8b9eb4" stroke-width="0.7" stroke-linejoin="round"/><path d="M528.600 115l5.700-4.900v9.800z" fill="#dcebf9" stroke="#8b9eb4" stroke-width="0.7" stroke-linejoin="round"/><path d="M585.400 115l-5.700-4.900v9.800z" fill="#dcebf9" stroke="#8b9eb4" stroke-width="0.7" stroke-linejoin="round"/><circle cx="581.700" cy="90.200" r="3.100" fill="#dcebf9" stroke="#8b9eb4" stroke-width="0.7" stroke-linejoin="round"/><path d="M549.300 88.800c-5.200 1.400-9.300 4.300-11.800 8.100l-1.700-1 0.400 5.600 5-2.400-1.600-0.900c2.200-3 5.600-5.300 10.500-6.500z" fill="#dcebf9" stroke="#8b9eb4" stroke-width="0.7" stroke-linejoin="round"/><path d="M564.300 88.800c5.200 1.400 9.300 4.300 11.800 8.100l1.700-1-0.400 5.600-5-2.400 1.600-0.900c-2.200-3-5.600-5.300-10.500-6.500z" fill="#dcebf9" stroke="#8b9eb4" stroke-width="0.7" stroke-linejoin="round"/><g fill="#e3eef9" stroke="#444a52" stroke-width="0.55" stroke-linejoin="round"><path d="M576.300 130.900l4.300 1.800v4.400l-4.300 2.100-4.300-2.100v-4.400z"/><path d="M572 132.700l4.300 1.900 4.300-1.900M576.300 134.600v4.600" fill="none"/></g></svg>
</body></html>
